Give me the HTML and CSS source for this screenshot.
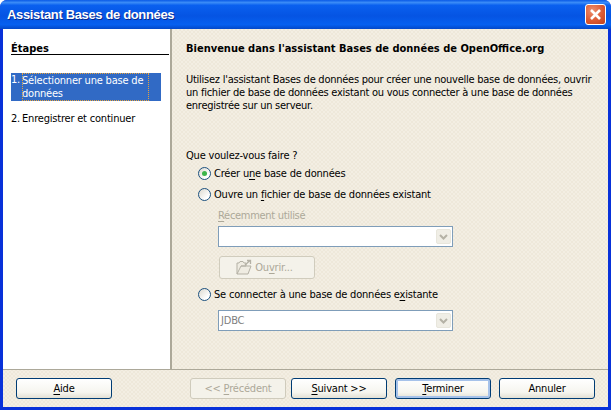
FILE: index.html
```html
<!DOCTYPE html>
<html lang="fr">
<head>
    <meta charset="UTF-8">
    <title>Assistant Bases de données</title>
    <link rel="stylesheet" href="styles.css">
</head>
<body>
    <div class="window">
        <div class="titlebar">
            <span class="title">Assistant Bases de données</span>
            <span class="close">
                <svg width="13" height="13" viewBox="0 0 13 13"><path d="M2 2 L11 11 M11 2 L2 11" stroke="#fff" stroke-width="2.6" fill="none"/></svg>
            </span>
        </div>
        <div class="client">
            <div class="main">
                <div class="sidebar">
                    <div class="steps-title"><u>É</u>tapes</div>
                    <div class="step step-active">
                        <span class="step-num">1.</span>
                        <span class="step-text">Sélectionner une base de données</span>
                    </div>
                    <div class="step">
                        <span class="step-num">2.</span>
                        <span class="step-text">Enregistrer et continuer</span>
                    </div>
                </div>
                <div class="content">
                    <div class="heading">Bienvenue dans l'assistant Bases de données de OpenOffice.org</div>
                    <p class="intro">Utilisez l'assistant Bases de données pour créer une nouvelle base de données, ouvrir un fichier de base de données existant ou vous connecter à une base de données enregistrée sur un serveur.</p>
                    <div class="question">Que voulez-vous faire ?</div>
                    <div class="radio radio-first"><span class="dot checked"></span><span>Créer u<u>n</u>e base de données</span></div>
                    <div class="radio"><span class="dot"></span><span>Ouvre un <u>f</u>ichier de base de données existant</span></div>
                    <div class="recent"><u>R</u>écemment utilisé</div>
                    <div class="combo combo-recent"><span class="combo-value"></span><span class="combo-btn"><svg width="9" height="6" viewBox="0 0 9 6"><path d="M1 1 L4.500 4.500 L8 1" stroke="#b5b2a6" stroke-width="2" fill="none"/></svg></span></div>
                    <div class="open-btn">
                        <svg width="18" height="17" viewBox="0 0 18 17"><path d="M2 15 V4 H4 L5 2.500 H8 L9 4 H11 V7 H6 L2 15 H13 L16 7 H6" fill="#efece2" stroke="#b4b1a5"/><path d="M10 6 L15 1.500 M12 1.500 H15.500 V5" stroke="#b4b1a5" fill="none" stroke-width="1.300"/></svg>
                        <span>Ou<u>v</u>rir...</span>
                    </div>
                    <div class="radio radio-last"><span class="dot"></span><span>Se connecter à une base de données e<u>x</u>istante</span></div>
                    <div class="combo combo-jdbc"><span class="combo-value">JDBC</span><span class="combo-btn"><svg width="9" height="6" viewBox="0 0 9 6"><path d="M1 1 L4.500 4.500 L8 1" stroke="#b5b2a6" stroke-width="2" fill="none"/></svg></span></div>
                </div>
            </div>
            <div class="footer">
                <div class="btn"><span><u>A</u>ide</span></div>
                <div class="footer-right">
                    <div class="btn btn-disabled"><span>&lt;&lt; <u>P</u>récédent</span></div>
                    <div class="btn"><span><u>S</u>uivant &gt;&gt;</span></div>
                    <div class="btn btn-default"><span><u>T</u>erminer</span></div>
                    <div class="btn"><span>Annuler</span></div>
                </div>
            </div>
        </div>
    </div>
</body>
</html>
```

FILE: styles.css
```css
* {
    box-sizing: border-box;
}

html, body {
    margin: 0;
    height: 100%;
    overflow: hidden;
}

body {
    font-family: "DejaVu Sans", Tahoma, sans-serif;
    font-stretch: condensed;
    font-size: 11px;
    letter-spacing: -0.2px;
    color: #000;
    background: #fff;
}

u {
    text-decoration-thickness: 1px;
    text-underline-offset: 2px;
}

.window {
    display: flex;
    flex-direction: column;
    width: 611px;
    height: 410px;
    background: #0831d9;
    border-radius: 7px 7px 0 0;
    overflow: hidden;
}

.titlebar {
    display: flex;
    align-items: center;
    justify-content: space-between;
    height: 29px;
    flex: none;
    padding: 0 5px 0 7px;
    background: linear-gradient(#0a5ae6 0%, #3b8cf7 9%, #0a60ef 18%, #0554e3 55%, #0660f0 85%, #0348c8 100%);
}

.title {
    color: #fff;
    font-family: "Liberation Sans", Arial, sans-serif;
    font-stretch: normal;
    font-weight: bold;
    font-size: 13px;
    letter-spacing: -0.35px;
    text-shadow: 1px 1px 0 #0a2a8c;
}

.close {
    display: flex;
    align-items: center;
    justify-content: center;
    width: 21px;
    height: 21px;
    border: 1px solid #fff;
    border-radius: 3px;
    background: radial-gradient(circle at 35% 30%, #ec8f6f, #dc5a33 55%, #c0401c);
}

.client {
    flex: 1;
    display: flex;
    flex-direction: column;
    margin: 0 3px 3px;
    background: repeating-conic-gradient(#f3eee3 0 25%, #eee8da 0 50%) 0 0 / 4px 4px;
}

.main {
    flex: 1;
    display: flex;
    border-bottom: 1px solid #aca899;
    min-height: 0;
}

.sidebar {
    width: 169px;
    flex: none;
    background: #fff;
    border-right: 2px solid #aca899;
    padding: 13px 0 0 8px;
}

.steps-title {
    font-weight: bold;
    letter-spacing: 0;
    width: 158px;
    height: 12px;
    line-height: 13px;
    border-bottom: 1px solid #000;
    box-sizing: content-box;
    margin-bottom: 18px;
}

.step {
    display: flex;
    width: 150px;
    line-height: 13px;
    margin-bottom: 11px;
}

.step-num {
    width: 11px;
    flex: none;
}

.step-active {
    background: #316ac5;
    color: #fff;
}

.step-active .step-text {
    width: 127px;
    padding: 1px 0;
    outline: 1px dotted #e8a33c;
    outline-offset: -1px;
}

.content {
    flex: 1;
    padding: 13px 0 0 14px;
}

.heading {
    font-weight: bold;
    letter-spacing: 0;
    line-height: 14px;
}

.intro {
    margin: 17px 0 0;
    width: 412px;
    line-height: 13px;
    letter-spacing: -0.25px;
}

.question {
    margin-top: 37px;
    line-height: 13px;
}

.radio {
    display: flex;
    align-items: center;
    gap: 3px;
    margin: 7px 0 0 12px;
    height: 14px;
    line-height: 13px;
}

.radio-first {
    margin-top: 4px;
}

.radio-last {
    margin-top: 8px;
}

.dot {
    position: relative;
    width: 13px;
    height: 13px;
    flex: none;
    border: 1px solid #1c5180;
    border-radius: 50%;
    background: linear-gradient(135deg, #dcd9cf, #fff 75%);
}

.checked::after {
    content: "";
    position: absolute;
    left: 3px;
    top: 3px;
    width: 5px;
    height: 5px;
    border-radius: 50%;
    background: #3cb54a;
}

.recent {
    margin: 8px 0 0 32px;
    color: #aca899;
    line-height: 13px;
    letter-spacing: -0.3px;
}

.combo {
    display: flex;
    align-items: center;
    justify-content: space-between;
    width: 235px;
    height: 21px;
    margin: 6px 0 0 32px;
    padding: 0 1px 0 2px;
    background: #fff;
    border: 1px solid #7f9db9;
    color: #808080;
}

.combo-recent {
    margin-top: 4px;
}

.combo-jdbc {
    margin-top: 9px;
}

.combo-btn {
    display: flex;
    align-items: center;
    justify-content: center;
    width: 15px;
    height: 15px;
    border-radius: 2px;
    background: #f0eee6;
    border: 1px solid #e8e6dc;
}

.open-btn {
    display: flex;
    align-items: center;
    justify-content: center;
    gap: 2px;
    width: 96px;
    height: 23px;
    margin: 9px 0 0 33px;
    padding-right: 6px;
    border: 1px solid #d0ccbd;
    border-radius: 3px;
    background: #f4f2ea;
    color: #aca899;
}

.footer {
    flex: none;
    display: flex;
    justify-content: space-between;
    height: 37px;
    padding: 8px 13px 0;
}

.footer-right {
    display: flex;
    gap: 8px;
}

.btn {
    display: flex;
    align-items: center;
    justify-content: center;
    width: 96px;
    height: 21px;
    border: 1px solid #003c74;
    border-radius: 3px;
    background: linear-gradient(#ffffff, #f6f5ef 70%, #e3e0d4);
}

.btn-disabled {
    margin-right: -3px;
    border-color: #cfcbbc;
    background: #f4f2ea;
    color: #aca899;
}

.btn-default {
    box-shadow: inset 0 0 0 2px #a6c2ea;
}
```
